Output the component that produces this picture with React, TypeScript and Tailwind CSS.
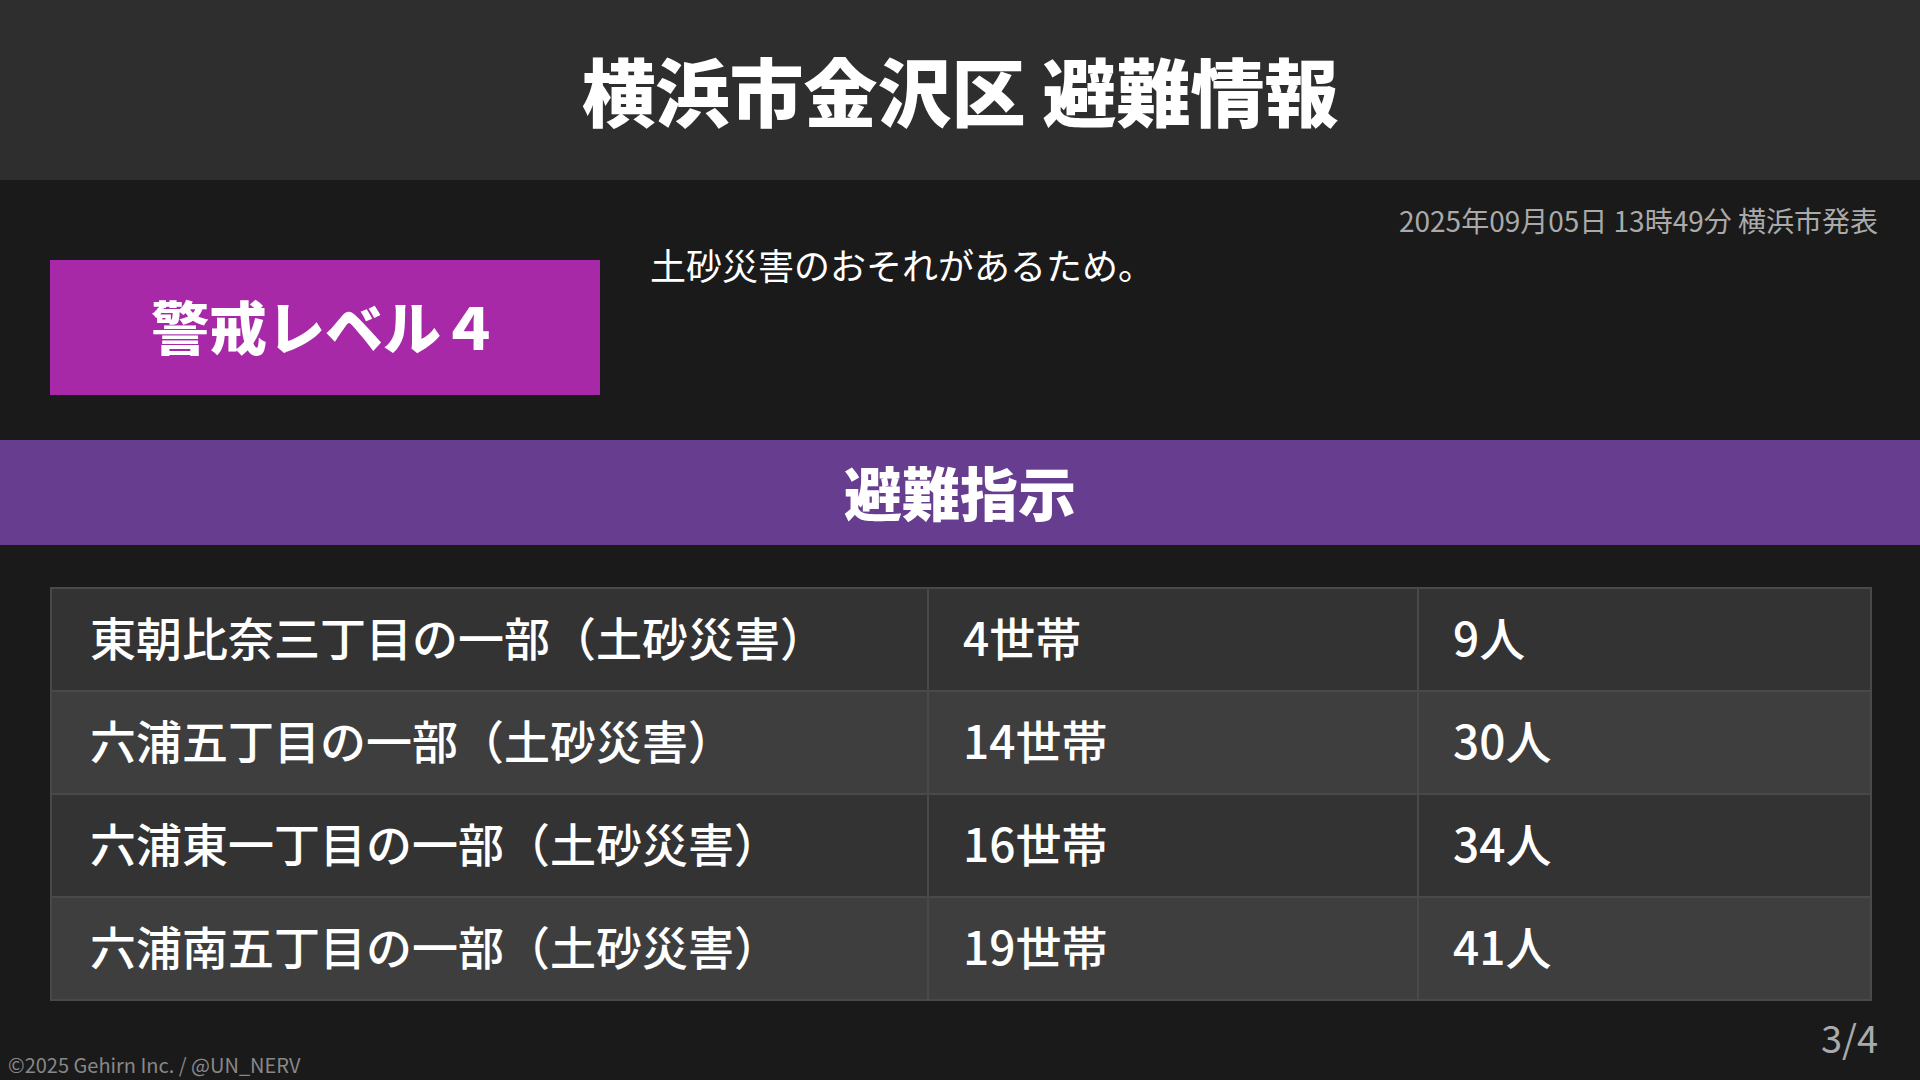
import React from 'react';

type Row = { area: string; households: string; people: string };

const rows: Row[] = [
  { area: '東朝比奈三丁目の一部（土砂災害）', households: '4世帯', people: '9人' },
  { area: '六浦五丁目の一部（土砂災害）', households: '14世帯', people: '30人' },
  { area: '六浦東一丁目の一部（土砂災害）', households: '16世帯', people: '34人' },
  { area: '六浦南五丁目の一部（土砂災害）', households: '19世帯', people: '41人' },
];

export default function App() {
  return (
    <div className="w-[1920px] h-[1080px] bg-[#1a1a1a] flex flex-col font-['Noto_Sans_CJK_JP',sans-serif] text-white overflow-hidden">
      <header className="h-[180px] bg-[#2e2e2e] flex items-center justify-center shrink-0">
        <h1 className="text-[74px] font-black leading-none pb-[2px]">横浜市金沢区 避難情報</h1>
      </header>

      <section className="h-[260px] pl-[50px] pr-[42px] pt-[20px] shrink-0">
        <div className="text-right text-[28px] leading-[40px] text-[#aaaaaa]">
          2025年09月05日 13時49分 横浜市発表
        </div>
        <div className="flex items-start">
          <div className="w-[550px] h-[135px] mt-[20px] bg-[#a829a8] flex items-center justify-center">
            <span className="text-[58px] font-black leading-none pb-[6px]">警戒レベル４</span>
          </div>
          <p className="ml-[50px] mt-0 text-[36px] leading-[48px]">土砂災害のおそれがあるため。</p>
        </div>
      </section>

      <div className="h-[105px] bg-[#673d8f] flex items-center justify-center shrink-0">
        <h2 className="text-[58px] font-black leading-none pb-[4px]">避難指示</h2>
      </div>

      <div className="px-[50px] mt-[42px] shrink-0">
        <table className="w-[1820px] border-collapse table-fixed">
          <colgroup>
            <col className="w-[877px]" />
            <col className="w-[490px]" />
            <col className="w-[453px]" />
          </colgroup>
          <tbody>
            {rows.map((r, i) => (
              <tr key={r.area} className={i % 2 === 0 ? 'bg-[#333333]' : 'bg-[#3e3e3e]'}>
                <td className="h-[103px] border-2 border-[#494949] pl-[38px] pb-[8px] text-[46px] font-medium leading-none whitespace-nowrap">
                  {r.area}
                </td>
                <td className="h-[103px] border-2 border-[#494949] pl-[34px] pb-[8px] text-[46px] font-medium leading-none">
                  {r.households}
                </td>
                <td className="h-[103px] border-2 border-[#494949] pl-[34px] pb-[8px] text-[46px] font-medium leading-none">
                  {r.people}
                </td>
              </tr>
            ))}
          </tbody>
        </table>
      </div>

      <footer className="flex-1 flex justify-between items-end pl-[8px] pr-[42px] pb-[2px]">
        <span className="text-[20px] leading-[26px] text-[#888888]">©2025 Gehirn Inc. / @UN_NERV</span>
        <span className="text-[38px] leading-none text-[#aaaaaa] mb-[22px]">3/4</span>
      </footer>
    </div>
  );
}
